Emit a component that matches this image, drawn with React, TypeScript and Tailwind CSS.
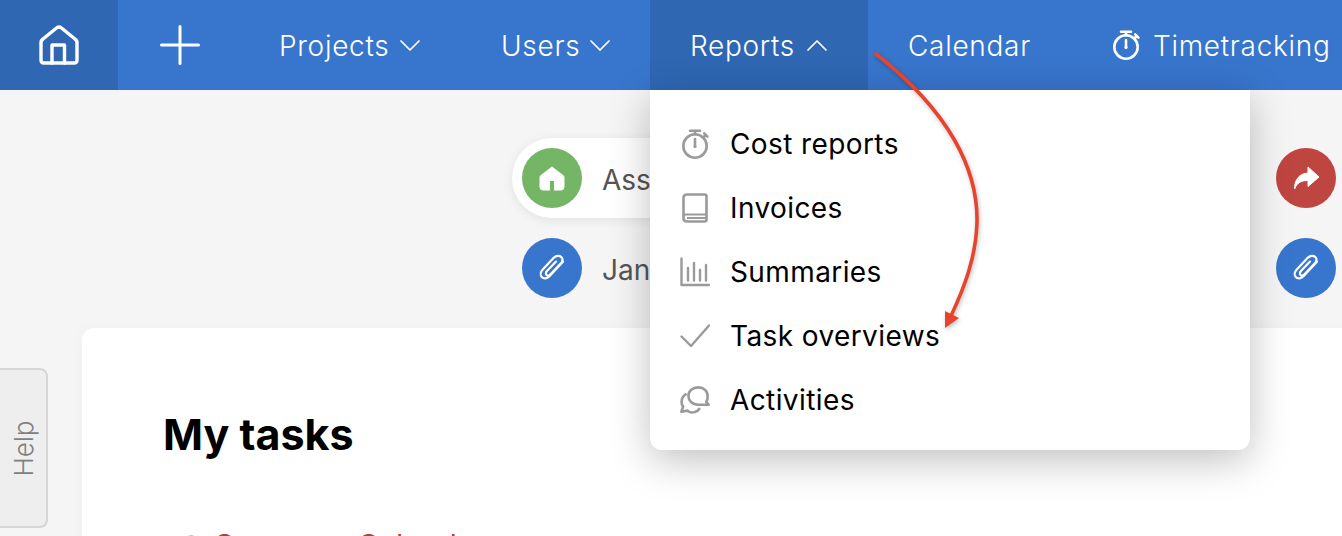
import React from 'react';

function HomeOutline() {
  return (
    <svg width="40" height="40" viewBox="0 0 40 40" fill="none" stroke="white" strokeWidth="3.4" strokeLinejoin="round" strokeLinecap="round">
      <path d="M2 17.5 C2 16 2.6 15 4 14 L17.5 3 C19 1.9 21 1.9 22.5 3 L36 14 C37.4 15 38 16 38 17.5 V35 C38 37 37 38 35 38 H5 C3 38 2 37 2 35 Z" />
      <path d="M13 38 V20 H25.5 V38" />
    </svg>
  );
}

function PlusIcon() {
  return (
    <svg width="40" height="40" viewBox="0 0 40 40" stroke="white" strokeWidth="3" strokeLinecap="round">
      <path d="M20 1.5 V38.5 M1.5 20 H38.5" />
    </svg>
  );
}

function Chevron({ up }: { up?: boolean }) {
  return (
    <svg width="20" height="11" viewBox="0 0 20 11" fill="none" stroke="white" strokeWidth="1.7" strokeLinecap="round" strokeLinejoin="round">
      <path d={up ? 'M1 10 L10 1 L19 10' : 'M1 1 L10 10 L19 1'} />
    </svg>
  );
}

function Stopwatch({ color, size }: { color: string; size: number }) {
  return (
    <svg width={size} height={size} viewBox="0 0 30 30" fill="none" stroke={color} strokeWidth="2.6" strokeLinecap="round">
      <circle cx="15" cy="17" r="11.7" />
      <path d="M10 1.8 H20 M15 1.8 V5.2 M24.2 4.4 L27.4 7.6 M25.8 6 L23.8 8" />
      <path d="M15 10 V17" />
      <circle cx="15" cy="17.5" r="1.6" fill={color} stroke="none" />
    </svg>
  );
}

function Book() {
  return (
    <svg width="26" height="30" viewBox="0 0 26 30" fill="none" stroke="#9a9a9a" strokeWidth="2.6" strokeLinejoin="round">
      <path d="M5 1.5 H22.5 C24 1.5 24.5 2 24.5 3.5 V26.5 C24.5 28 24 28.5 22.5 28.5 H5 C2.5 28.5 1.5 27.5 1.5 25.5 V5 C1.5 2.5 2.5 1.5 5 1.5 Z" />
      <path d="M1.5 23.5 C1.5 22 2.5 21.5 4 21.5 H24.5 M5 25 H24.5" strokeWidth="2" />
    </svg>
  );
}

function ChartIcon() {
  return (
    <svg width="30" height="30" viewBox="0 0 30 30" fill="none" stroke="#9a9a9a" strokeWidth="2.4" strokeLinecap="round" strokeLinejoin="round">
      <path d="M1.5 1.5 V28 H29" />
      <path d="M8 11 V23.5 M14 6 V23.5 M20 13 V23.5 M26 8 V23.5" />
    </svg>
  );
}

function CheckIcon() {
  return (
    <svg width="30" height="24" viewBox="0 0 30 24" fill="none" stroke="#9a9a9a" strokeWidth="2.4" strokeLinecap="round" strokeLinejoin="round">
      <path d="M1.5 12.5 L11 22 L29 1.5" />
    </svg>
  );
}

function Chats() {
  return (
    <svg width="30" height="30" viewBox="0 0 32 30" fill="none" stroke="#9a9a9a" strokeWidth="2.8" strokeLinejoin="round" strokeLinecap="round">
      <path d="M19.5 1.5 C25.5 1.5 29.5 5.5 29.5 11 C29.5 13.5 29 15.5 28 17 L30.5 20 L19.5 20 C13 20 9 15.5 9 10.7 C9 5.5 13.5 1.5 19.5 1.5 Z" />
      <path d="M6 9 C3 11 1.7 14 1.7 17 C1.7 19 2.2 20.5 3.3 22 L1.5 27.5 L8 26.3 C10 28.2 13.5 28.7 16 27.7 C18 27 19.5 26 20.5 24.5" />
    </svg>
  );
}

function Paperclip() {
  return (
    <svg width="30" height="30" viewBox="0 0 26 26" fill="none" stroke="white" strokeWidth="1.9" strokeLinecap="round" strokeLinejoin="round">
      <path d="M22.5 7.5 L11 20 C9 22.3 5.8 22.5 4.3 21 C2.6 19.3 3 16.3 5 14.2 L14.7 4 C16.7 2 19.6 2 21 3.4 C22.5 4.9 22.2 7.3 20.5 9.2 L11.5 18.6 C10.4 19.7 9 19.8 8.2 19 C7.4 18.2 7.5 16.8 8.6 15.7 L16.5 7.4" />
    </svg>
  );
}

function HomeSolid() {
  return (
    <svg width="28" height="28" viewBox="0 0 28 28" fill="white">
      <path fillRule="evenodd" d="M14 2.5 L25 11 C26 11.8 26.5 12.7 26.5 14 V22.5 C26.5 25 25 26.5 22.5 26.5 H5.5 C3 26.5 1.5 25 1.5 22.5 V14 C1.5 12.7 2 11.8 3 11 Z M12 17 V26.5 H16 V17 Z" />
    </svg>
  );
}

function ShareArrow() {
  return (
    <svg width="28" height="28" viewBox="0 0 28 28" fill="white">
      <path d="M16 3 L27 13 L16 22.5 V16.5 C9.5 16.5 5 18.5 2.5 25 C2.5 15.5 7.5 9.5 16 9 Z" strokeLinejoin="round" stroke="white" strokeWidth="1" />
    </svg>
  );
}

function MenuRow({ icon, label }: { icon: React.ReactNode; label: string }) {
  return (
    <div className="flex items-center h-16 pl-7">
      <div className="w-[34px] flex justify-center">{icon}</div>
      <span className="ml-[18px]">{label}</span>
    </div>
  );
}

function Circle({ color, children }: { color: string; children: React.ReactNode }) {
  return <div className={`w-[60px] h-[60px] rounded-full flex items-center justify-center ${color}`}>{children}</div>;
}

export default function App() {
  return (
    <div className="relative w-[1342px] h-[536px] overflow-hidden bg-[#f5f5f5] font-['Inter',sans-serif]">
      {/* top bar */}
      <div className="flex items-center h-[90px] bg-[#3875cc] text-white text-[28px] font-[350] tracking-[0.7px] whitespace-nowrap">
        <div className="w-[118px] h-full shrink-0 bg-[#2f67b3] flex items-center justify-center">
          <HomeOutline />
        </div>
        <div className="w-[124px] h-full shrink-0 flex items-center justify-center">
          <PlusIcon />
        </div>
        <div className="flex items-center w-[219px] h-full shrink-0 pl-[37px] gap-[11px]">
          <span className="pt-[2px]">Projects</span>
          <Chevron />
        </div>
        <div className="flex items-center w-[189px] h-full shrink-0 pl-[40px] gap-[10px]">
          <span className="pt-[2px]">Users</span>
          <Chevron />
        </div>
        <div className="flex items-center h-full shrink-0 w-[218px] pl-[40px] gap-[12px] bg-[#2f67b3]">
          <span className="pt-[2px]">Reports</span>
          <Chevron up />
        </div>
        <div className="flex items-center w-[243px] h-full shrink-0 pl-[40px]">
          <span className="pt-[2px]">Calendar</span>
        </div>
        <div className="flex items-center h-full shrink-0 gap-[12px]">
          <Stopwatch color="white" size={30} />
          <span className="pt-[2px]">Timetracking</span>
          <Chevron />
        </div>
      </div>

      {/* activity rows */}
      <div className="flex justify-between pl-[512px] pr-[6px] pt-[48px]">
        <div className="flex flex-col gap-[20px]">
          <div className="w-[300px] h-[80px] rounded-l-[40px] bg-white shadow-[0_2px_12px_rgba(0,0,0,0.08)] flex items-center pl-[10px] gap-5">
            <Circle color="bg-[#74b566]"><HomeSolid /></Circle>
            <span className="pt-[3px] text-[28px] text-[#555]">Assigned</span>
          </div>
          <div className="flex items-center pl-[10px] gap-5">
            <Circle color="bg-[#3875cc]"><Paperclip /></Circle>
            <span className="pt-[3px] text-[28px] text-[#555]">Jan</span>
          </div>
        </div>
        <div className="flex flex-col gap-[30px] pt-[10px]">
          <Circle color="bg-[#bf4540]"><ShareArrow /></Circle>
          <Circle color="bg-[#3875cc]"><Paperclip /></Circle>
        </div>
      </div>

      {/* tasks card */}
      <div className="absolute left-[82px] top-[328px] w-[1300px] h-[300px] bg-white rounded-xl shadow-[0_0_14px_rgba(0,0,0,0.03)] pt-[80px] pl-[81px]">
        <h1 className="text-[43px] font-bold leading-[52px] text-black">My tasks</h1>
        <div className="mt-[63px] flex items-center ml-[24px] gap-[18px] text-[30px] text-[#b0413e]">
          <span className="w-[8px] h-[8px] rounded-full bg-[#c4c4c4] -mt-[14px]"></span>
          <span>Company Calendar</span>
        </div>
      </div>

      {/* help tab */}
      <div className="absolute left-[-2px] top-[368px] w-[50px] h-[160px] bg-[#eeeeee] border-2 border-[#d6d6d6] rounded-r-lg flex items-center justify-center">
        <span className="-rotate-90 text-[26px] font-light text-[#808080]">Help</span>
      </div>

      {/* reports dropdown */}
      <div className="absolute left-[650px] top-[90px] w-[600px] h-[360px] bg-white rounded-b-xl shadow-[0_10px_40px_rgba(0,0,0,0.25)] pt-[22px] text-[28px] tracking-[0.4px] text-black">
        <MenuRow icon={<Stopwatch color="#9a9a9a" size={30} />} label="Cost reports" />
        <MenuRow icon={<Book />} label="Invoices" />
        <MenuRow icon={<ChartIcon />} label="Summaries" />
        <MenuRow icon={<CheckIcon />} label="Task overviews" />
        <MenuRow icon={<Chats />} label="Activities" />
      </div>

      {/* annotation arrow */}
      <svg className="absolute left-0 top-0 pointer-events-none drop-shadow-[1px_2px_2px_rgba(0,0,0,0.25)]" width="1342" height="536" fill="none">
        <path d="M876 54 C 950 112, 978 170, 977 222 C 976 258, 964 288, 951 316" stroke="#e8442c" strokeWidth="3.6" strokeLinecap="round" />
        <path d="M945 328 L945 311 L959 318 Z" fill="#e8442c" />
      </svg>
    </div>
  );
}
